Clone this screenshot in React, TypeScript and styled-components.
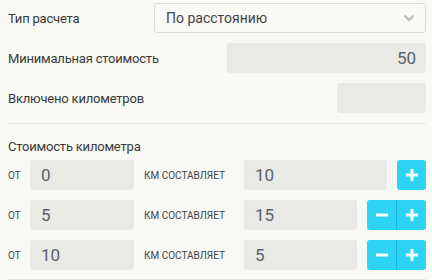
import React from 'react'
import styled, { createGlobalStyle } from 'styled-components'

const GlobalStyle = createGlobalStyle`
  body {
    margin: 0;
    background: #f8f8f4;
    font-family: Roboto, "Liberation Sans", sans-serif;
    color: #383838;
  }
`

const Panel = styled.div`
  width: 432px;
  height: 280px;
  box-sizing: border-box;
  padding: 3px 6px 0 8px;
  overflow: hidden;
`

const FieldRow = styled.div`
  display: flex;
  align-items: center;
  height: 30px;
  margin-bottom: 10px;
`

const Label = styled.div`
  flex: 1;
  font-size: 13px;
  letter-spacing: -0.2px;
`

const Select = styled.div`
  width: 272px;
  height: 30px;
  box-sizing: border-box;
  border: 1px solid #dddcd8;
  border-radius: 3px;
  background: #f9f9f6;
  display: flex;
  align-items: center;
  justify-content: space-between;
  padding: 0 10px 0 11px;
  font-size: 14px;
  color: #444;
`

const Field = styled.div<{ $w?: number; $align?: string }>`
  width: ${p => (p.$w ? p.$w + 'px' : 'auto')};
  flex: ${p => (p.$w ? 'none' : '1')};
  height: 30px;
  box-sizing: border-box;
  background: #e9eae6;
  border-radius: 3px;
  display: flex;
  align-items: center;
  justify-content: ${p => (p.$align === 'right' ? 'flex-end' : 'flex-start')};
  padding: 0 10px 0 11px;
  font-size: 17px;
  color: #5a6069;
`

const Divider = styled.div`
  height: 1px;
  background: #e5e5e1;
`

const Heading = styled.div`
  font-size: 13px;
  letter-spacing: -0.2px;
  margin: 15px 0 5px;
  line-height: 16px;
`

const TierRow = styled.div`
  display: flex;
  align-items: center;
  height: 30px;
  margin-bottom: 10px;
`

const From = styled.div`
  width: 22px;
  font-size: 10px;
  text-transform: uppercase;
  color: #444;
`

const Per = styled.div`
  width: 110px;
  padding-left: 10px;
  box-sizing: border-box;
  font-size: 10px;
  text-transform: uppercase;
  color: #444;
`

const Buttons = styled.div`
  display: flex;
  margin-left: 10px;
  border-radius: 3px;
  overflow: hidden;
`

const Btn = styled.div<{ $sep?: boolean }>`
  width: ${p => (p.$sep ? '30px' : '29px')};
  height: 30px;
  background: #2cd3f2;
  display: flex;
  align-items: center;
  justify-content: center;
  border-left: ${p => (p.$sep ? '1px solid #15b8dc' : 'none')};
  box-sizing: border-box;
`

const Bottom = styled.div`
  height: 1px;
  background: #e5e5e1;
  margin-top: -1px;
`

const Minus = () => (
  <svg width="14" height="14" viewBox="0 0 14 14">
    <rect x="1" y="5.5" width="12" height="3" fill="#fff" />
  </svg>
)

const Plus = () => (
  <svg width="14" height="14" viewBox="0 0 14 14">
    <rect x="1" y="5.5" width="12" height="3" fill="#fff" />
    <rect x="5.5" y="1" width="3" height="12" fill="#fff" />
  </svg>
)

const Chevron = () => (
  <svg width="12" height="8" viewBox="0 0 12 8">
    <path d="M1.5 1.5 L6 6 L10.5 1.5" stroke="#bdbdbb" strokeWidth="2.4" fill="none" />
  </svg>
)

const tiers = [
  { from: '0', price: '10', canRemove: false },
  { from: '5', price: '15', canRemove: true },
  { from: '10', price: '5', canRemove: true },
]

export default function App() {
  return (
    <>
      <GlobalStyle />
      <Panel>
        <FieldRow>
          <Label>Тип расчета</Label>
          <Select>
            <span>По расстоянию</span>
            <Chevron />
          </Select>
        </FieldRow>
        <FieldRow>
          <Label>Минимальная стоимость</Label>
          <Field $w={199} $align="right">50</Field>
        </FieldRow>
        <FieldRow>
          <Label>Включено километров</Label>
          <Field $w={89} />
        </FieldRow>
        <Divider />
        <Heading>Стоимость километра</Heading>
        {tiers.map((t, i) => (
          <TierRow key={i}>
            <From>от</From>
            <Field $w={104}>{t.from}</Field>
            <Per>км составляет</Per>
            <Field>{t.price}</Field>
            <Buttons>
              {t.canRemove && (
                <Btn>
                  <Minus />
                </Btn>
              )}
              <Btn $sep={t.canRemove}>
                <Plus />
              </Btn>
            </Buttons>
          </TierRow>
        ))}
        <Bottom />
      </Panel>
    </>
  )
}
